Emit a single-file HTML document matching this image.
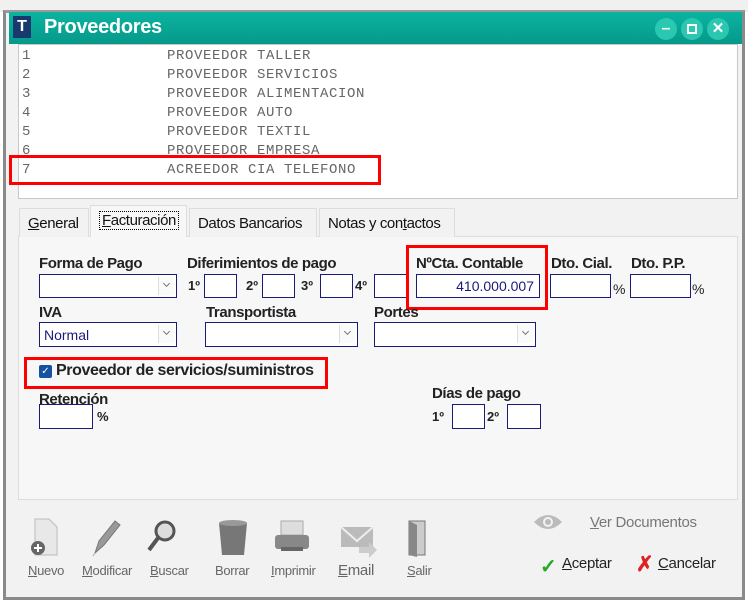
<!DOCTYPE html>
<html><head><meta charset="utf-8"><style>
*{margin:0;padding:0;box-sizing:border-box}
body{width:748px;height:604px;background:#fff;position:relative;overflow:hidden;font-family:"Liberation Sans",Arial,sans-serif}
.a{position:absolute}
.lbl{position:absolute;font-weight:bold;font-size:15px;color:#222;letter-spacing:-0.4px}
.box{position:absolute;background:#fff;border:1px solid #1a1a7a}
.sel:after{content:"";position:absolute;right:2px;top:2px;width:15px;height:18px;border-left:1px solid #ddd;background:#fafafa}
.sel i{position:absolute;right:7px;top:6px;width:5px;height:5px;border-right:1px solid #777;border-bottom:1px solid #777;transform:rotate(45deg);z-index:2}
.red{position:absolute;border:3px solid #f00}
.row{position:absolute;font-family:"Liberation Mono",monospace;font-size:14px;letter-spacing:0.6px;color:#666}
.tab{position:absolute;top:208px;height:29px;border:1px solid #ddd;border-bottom:none;background:#f2f2f2;font-size:15px;color:#111;padding:6px 0 0 8px;letter-spacing:-0.4px}
.ft{position:absolute;top:563px;font-size:13px;color:#666;letter-spacing:-0.3px}
.ord{position:absolute;font-weight:bold;font-size:13px;color:#222}
</style></head><body>
<div class="a" style="left:0;top:0;width:748px;height:12px;background:#f0f0f0"></div>
<div class="a" style="left:3px;top:10px;width:742px;height:590px;background:#f2f2f2;border:3px solid #8a8a8a;border-top-color:#9a9a9a"></div>
<div class="a" style="left:9px;top:12px;width:733px;height:32px;background:linear-gradient(#0bb3a0,#06998a)"></div>
<div class="a" style="left:13px;top:16px;width:18px;height:22px;background:#163a6e;color:#fff;font-weight:bold;font-size:16px;text-align:center;line-height:22px">T</div>
<div class="a" style="left:44px;top:16px;color:#fff;font-weight:bold;font-size:20px;letter-spacing:-0.3px">Proveedores</div>
<div class="a" style="left:655px;top:18px;width:22px;height:22px;border-radius:50%;background:#2ac8b0;color:#fff;font-weight:bold;text-align:center;line-height:21px;font-size:16px">–</div>
<div class="a" style="left:681px;top:18px;width:22px;height:22px;border-radius:50%;background:#2ac8b0"><div class="a" style="left:6px;top:6px;width:10px;height:10px;border:2px solid #fff"></div></div>
<div class="a" style="left:707px;top:18px;width:22px;height:22px;border-radius:50%;background:#2ac8b0;color:#fff;font-weight:bold;text-align:center;line-height:21px;font-size:15px">✕</div>

<div class="a" style="left:18px;top:44px;width:720px;height:155px;background:#fff;border:1px solid #c8c8c8"></div>
<div class="row" style="left:22px;top:48px">1</div><div class="row" style="left:167px;top:48px">PROVEEDOR TALLER</div>
<div class="row" style="left:22px;top:67px">2</div><div class="row" style="left:167px;top:67px">PROVEEDOR SERVICIOS</div>
<div class="row" style="left:22px;top:86px">3</div><div class="row" style="left:167px;top:86px">PROVEEDOR ALIMENTACION</div>
<div class="row" style="left:22px;top:105px">4</div><div class="row" style="left:167px;top:105px">PROVEEDOR AUTO</div>
<div class="row" style="left:22px;top:124px">5</div><div class="row" style="left:167px;top:124px">PROVEEDOR TEXTIL</div>
<div class="row" style="left:22px;top:143px">6</div><div class="row" style="left:167px;top:143px">PROVEEDOR EMPRESA</div>
<div class="row" style="left:22px;top:162px">7</div><div class="row" style="left:167px;top:162px">ACREEDOR CIA TELEFONO</div>
<div class="red" style="left:9px;top:155px;width:372px;height:30px"></div>

<div class="a" style="left:18px;top:236px;width:720px;height:264px;background:#f7f7f7;border:1px solid #ddd"></div>
<div class="tab" style="left:19px;width:70px"><u>G</u>eneral</div>
<div class="tab" style="left:90px;width:97px;top:205px;height:32px;background:#f7f7f7"><span style="border:1px dotted #000;padding:0 2px"><u>F</u>acturación</span></div>
<div class="tab" style="left:189px;width:128px">Datos Bancarios</div>
<div class="tab" style="left:319px;width:136px">Notas y con<u>t</u>actos</div>

<div class="lbl" style="left:39px;top:255px">Forma de Pago</div>
<div class="box sel" style="left:39px;top:274px;width:138px;height:24px"><i></i></div>
<div class="lbl" style="left:187px;top:255px">Diferimientos de pago</div>
<div class="ord" style="left:188px;top:278px">1º</div><div class="box" style="left:204px;top:274px;width:33px;height:24px"></div>
<div class="ord" style="left:246px;top:278px">2º</div><div class="box" style="left:262px;top:274px;width:33px;height:24px"></div>
<div class="ord" style="left:301px;top:278px">3º</div><div class="box" style="left:320px;top:274px;width:33px;height:24px"></div>
<div class="ord" style="left:355px;top:278px">4º</div><div class="box" style="left:374px;top:274px;width:33px;height:24px"></div>
<div class="lbl" style="left:416px;top:255px">NºCta. Contable</div>
<div class="box" style="left:416px;top:274px;width:124px;height:24px;color:#1a1a7a;font-size:14px;text-align:right;padding:3px 5px 0 0">410.000.007</div>
<div class="red" style="left:406px;top:245px;width:142px;height:65px"></div>
<div class="lbl" style="left:551px;top:255px">Dto. Cial.</div>
<div class="box" style="left:550px;top:274px;width:61px;height:24px"></div><div class="ord" style="left:613px;top:281px;font-weight:normal;font-size:14px">%</div>
<div class="lbl" style="left:631px;top:255px">Dto. P.P.</div>
<div class="box" style="left:630px;top:274px;width:61px;height:24px"></div><div class="ord" style="left:692px;top:281px;font-weight:normal;font-size:14px">%</div>

<div class="lbl" style="left:39px;top:304px">IVA</div>
<div class="box sel" style="left:39px;top:322px;width:138px;height:25px;color:#1a1a7a;font-size:14px;padding:4px 0 0 4px"><i></i>Normal</div>
<div class="lbl" style="left:206px;top:304px">Transportista</div>
<div class="box sel" style="left:205px;top:322px;width:153px;height:25px"><i></i></div>
<div class="lbl" style="left:374px;top:304px">Portes</div>
<div class="box sel" style="left:374px;top:322px;width:162px;height:25px"><i></i></div>

<div class="a" style="left:39px;top:365px;width:13px;height:13px;background:#1553a0;border-radius:2px;color:#fff;font-size:10px;text-align:center;line-height:13px">✓</div>
<div class="lbl" style="left:56px;top:362px;font-size:16px">Proveedor de servicios/suministros</div>
<div class="red" style="left:24px;top:357px;width:304px;height:32px"></div>

<div class="lbl" style="left:39px;top:391px">Retención</div>
<div class="box" style="left:39px;top:404px;width:54px;height:25px"></div><div class="ord" style="left:97px;top:409px">%</div>
<div class="lbl" style="left:432px;top:385px">Días de pago</div>
<div class="ord" style="left:432px;top:409px">1º</div><div class="box" style="left:452px;top:404px;width:33px;height:25px"></div>
<div class="ord" style="left:487px;top:409px">2º</div><div class="box" style="left:507px;top:404px;width:34px;height:25px"></div>

<svg class="a" style="left:25px;top:517px" width="420" height="42" viewBox="0 0 420 42">
<path d="M10 2h14l8 8v28H10z" fill="#e8e8e8" stroke="#bbb"/><circle cx="13" cy="31" r="7" fill="#666"/><path d="M13 27v8M9 31h8" stroke="#fff" stroke-width="2"/>
<path d="M70 36l4-12 16-20 5 4-16 20z" fill="#999" stroke="#777"/><path d="M70 36l-2 3" stroke="#aaa"/>
<circle cx="140" cy="14" r="9" fill="#ddd" stroke="#555" stroke-width="3"/><path d="M133 21l-9 12" stroke="#555" stroke-width="4"/>
<path d="M194 6h28l-3 32h-22z" fill="#777"/><ellipse cx="208" cy="6" rx="14" ry="3" fill="#999"/>
<rect x="256" y="4" width="22" height="14" fill="#ddd" stroke="#aaa"/><rect x="250" y="18" width="34" height="14" rx="3" fill="#888"/><rect x="256" y="30" width="22" height="4" fill="#666"/>
<path d="M316 10h32v20h-32z" fill="#bbb"/><path d="M316 10l16 14 16-14" fill="none" stroke="#eee" stroke-width="2"/><path d="M334 30h10v-5l8 8-8 8v-5h-10z" fill="#ccc"/>
<rect x="384" y="4" width="16" height="34" fill="#ccc" stroke="#777"/><path d="M384 4l8 4v32l-8-2z" fill="#888"/>
</svg>
<div class="ft" style="left:28px"><u>N</u>uevo</div>
<div class="ft" style="left:82px"><u>M</u>odificar</div>
<div class="ft" style="left:150px"><u>B</u>uscar</div>
<div class="ft" style="left:215px">Borrar</div>
<div class="ft" style="left:271px"><u>I</u>mprimir</div>
<div class="ft" style="left:338px;font-size:15px;top:562px"><u>E</u>mail</div>
<div class="ft" style="left:407px"><u>S</u>alir</div>
<svg class="a" style="left:533px;top:512px" width="30" height="20"><path d="M1 10Q15 -4 29 10Q15 24 1 10z" fill="#bbb"/><circle cx="15" cy="10" r="5" fill="#f2f2f2"/><circle cx="15" cy="10" r="3" fill="#bbb"/></svg>
<div class="a" style="left:590px;top:514px;font-size:15px;color:#777;letter-spacing:-0.3px"><u>V</u>er Documentos</div>
<div class="a" style="left:540px;top:554px;color:#2a2;font-size:20px;font-weight:bold">✓</div>
<div class="a" style="left:562px;top:555px;font-size:15px;color:#222;letter-spacing:-0.3px"><u>A</u>ceptar</div>
<div class="a" style="left:636px;top:552px;color:#d22;font-size:21px;font-weight:bold">✗</div>
<div class="a" style="left:658px;top:555px;font-size:15px;color:#222;letter-spacing:-0.3px"><u>C</u>ancelar</div>
</body></html>
